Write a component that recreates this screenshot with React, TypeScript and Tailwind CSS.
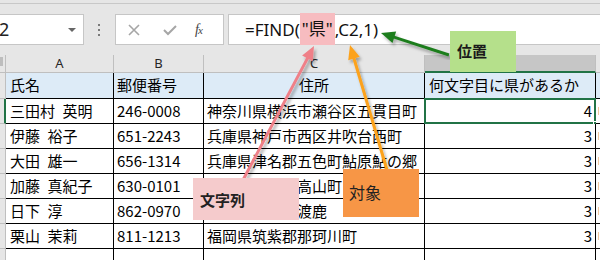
import React from "react";

type Row = { name: string; zip: string; addr: string; pos: string };

const rows: Row[] = [
  { name: "三田村\u2002英明", zip: "246-0008", addr: "神奈川県横浜市瀬谷区五貫目町", pos: "4" },
  { name: "伊藤\u2002裕子", zip: "651-2243", addr: "兵庫県神戸市西区井吹台西町", pos: "3" },
  { name: "大田\u2002雄一", zip: "656-1314", addr: "兵庫県津名郡五色町鮎原鮎の郷", pos: "3" },
  { name: "加藤\u2002真紀子", zip: "630-0101", addr: "奈良県生駒市高山町", pos: "3" },
  { name: "日下\u2002淳", zip: "862-0970", addr: "熊本県熊本市渡鹿", pos: "3" },
  { name: "栗山\u2002茉莉", zip: "811-1213", addr: "福岡県筑紫郡那珂川町", pos: "3" },
];

type Arrow = { x1: number; y1: number; x2: number; y2: number; color: string };

const arrows: Arrow[] = [
  { x1: 449, y1: 55, x2: 381, y2: 33, color: "#1f7d1f" },
  { x1: 243, y1: 180, x2: 314, y2: 46, color: "#ef8088" },
  { x1: 387, y1: 170, x2: 350, y2: 45, color: "#fca21c" },
];

function ArrowShape({ a }: { a: Arrow }) {
  const dx = a.x2 - a.x1;
  const dy = a.y2 - a.y1;
  const len = Math.hypot(dx, dy);
  const ux = dx / len;
  const uy = dy / len;
  const head = 14;
  const half = 6;
  const bx = a.x2 - ux * head;
  const by = a.y2 - uy * head;
  const pts = `${a.x2},${a.y2} ${bx - uy * half},${by + ux * half} ${bx + uy * half},${by - ux * half}`;
  return (
    <g filter="url(#shadow)">
      <line x1={a.x1} y1={a.y1} x2={bx + ux * 2} y2={by + uy * 2} stroke={a.color} strokeWidth={3} />
      <polygon points={pts} fill={a.color} />
    </g>
  );
}

function ColHead({ label, w, active }: { label: string; w: string; active?: boolean }) {
  return (
    <div
      className={`${w} shrink-0 flex items-center justify-center border-r border-[#bfbfbf] text-[13px] font-['Noto_Sans',sans-serif] ${
        active ? "bg-[#c6c6c6] border-b-2 border-b-[#217346] text-[#217346]" : "border-b border-b-[#bfbfbf] text-[#262626]"
      }`}
    >
      {label}
    </div>
  );
}

export default function App() {
  return (
    <div className="relative w-[600px] h-[260px] overflow-hidden bg-[#e6e6e6] font-['Noto_Sans_CJK_JP',sans-serif] text-black">
      {/* formula bar */}
      <div className="mt-[3px] h-[52px] border-t border-[#c8c8c8] flex items-start pt-[10px]">
        <div className="relative w-[84px] h-[31px] shrink-0 bg-white border border-l-0 border-[#c6c6c6] flex items-center">
          <span className="ml-[-1px] text-[18px] font-['Noto_Sans',sans-serif] text-[#222]">2</span>
          <span className="absolute right-[7px] top-[13px] w-0 h-0 border-l-[4px] border-r-[4px] border-t-[4px] border-l-transparent border-r-transparent border-t-[#666]" />
        </div>
        <div className="w-[31px] h-[31px] shrink-0 flex flex-col items-center justify-center gap-[3px] pr-[1px]">
          <span className="w-[2px] h-[2px] bg-[#7a7a7a]" />
          <span className="w-[2px] h-[2px] bg-[#7a7a7a]" />
          <span className="w-[2px] h-[2px] bg-[#7a7a7a]" />
        </div>
        <div className="w-[109px] h-[31px] shrink-0 bg-white border border-[#c6c6c6] flex items-center">
          <svg width="14" height="14" viewBox="0 0 14 14" className="ml-[11px]">
            <path d="M2 2 L12 12 M12 2 L2 12" stroke="#a6a6a6" strokeWidth="1.6" />
          </svg>
          <svg width="16" height="14" viewBox="0 0 16 14" className="ml-[21px]">
            <path d="M2 7 L6 11 L14 3" stroke="#a6a6a6" strokeWidth="2" fill="none" />
          </svg>
          <span className="ml-[17px] text-[14px] italic font-['Liberation_Serif',serif] text-[#444] tracking-[-1px]">
            f<span className="text-[11px]">x</span>
          </span>
        </div>
        <div className="ml-[4px] flex-1 h-[31px] bg-white border border-r-0 border-[#c6c6c6] flex items-stretch pl-[16px] text-[17px] font-['Noto_Sans','Noto_Sans_CJK_JP',sans-serif] text-[#111]">
          <span className="flex items-center">=FIND(</span>
          <span className="flex items-center bg-[#f7bcc0] px-[2px] -mt-[2px] -mb-[1px]">"県"</span>
          <span className="flex items-center">,C2,1)</span>
        </div>
      </div>

      {/* column headers */}
      <div className="flex h-[18px]">
        <div className="w-[6px] shrink-0 border-r border-b border-[#bfbfbf] relative">
          <span className="absolute left-0 top-[2px] w-[3px] h-[9px] bg-[#bdbdbd]" />
        </div>
        <ColHead label="A" w="w-[108px]" />
        <ColHead label="B" w="w-[90px]" />
        <ColHead label="C" w="w-[221px]" />
        <ColHead label="" w="w-[171px]" active />
        <div className="flex-1 border-b border-[#bfbfbf]" />
      </div>

      {/* header row */}
      <div className="flex h-[26px] text-[15px]">
        <div className="w-[6px] shrink-0 border-r border-b border-[#bfbfbf]" />
        <div className="w-[108px] shrink-0 bg-[#ddebf7] border-r border-b border-black flex items-center pl-[4px]">氏名</div>
        <div className="w-[90px] shrink-0 bg-[#ddebf7] border-r border-b border-black flex items-center pl-[3px]">郵便番号</div>
        <div className="w-[221px] shrink-0 bg-[#ddebf7] border-r border-b border-black flex items-center justify-center">住所</div>
        <div className="w-[171px] shrink-0 bg-[#ddebf7] border-r border-b border-black flex items-center pl-[4px]">何文字目に県があるか</div>
        <div className="flex-1 bg-[#ddebf7] border-b border-black" />
      </div>

      {/* data rows */}
      {rows.map((r, i) => (
        <div key={r.zip} className="flex h-[25px] text-[15px]">
          <div
            className={`w-[6px] shrink-0 border-b border-[#bfbfbf] ${
              i === 0 ? "border-r-2 border-r-[#217346]" : "border-r border-r-[#bfbfbf]"
            }`}
          />
          <div className="w-[108px] shrink-0 bg-white border-r border-b border-black flex items-center pl-[4px] whitespace-nowrap">
            {r.name}
          </div>
          <div className="w-[90px] shrink-0 bg-white border-r border-b border-black flex items-center pl-[3px]">{r.zip}</div>
          <div className="w-[221px] shrink-0 bg-white border-r border-b border-black flex items-center pl-[3px] whitespace-nowrap overflow-hidden">
            {r.addr}
          </div>
          <div className="relative w-[171px] shrink-0 bg-white border-r border-b border-black flex items-center justify-end pr-[3px]">
            {r.pos}
            {i === 0 && (
              <>
                <span className="absolute -top-[1px] -left-[1px] -right-[1px] -bottom-[1px] border-2 border-[#217346]" />
                <span className="absolute -right-[3px] -bottom-[3px] w-[5px] h-[5px] bg-[#217346] border border-white" />
              </>
            )}
          </div>
          <div className="flex-1 bg-white border-b border-black relative">
            <span className="absolute left-[2px] top-[8px] w-[1px] h-[8px] bg-[#f0c8a0]" />
          </div>
        </div>
      ))}

      {/* empty row */}
      <div className="flex h-[25px]">
        <div className="w-[6px] shrink-0 border-r border-[#bfbfbf]" />
        <div className="w-[108px] shrink-0 bg-white border-r border-black" />
        <div className="w-[90px] shrink-0 bg-white border-r border-black" />
        <div className="w-[221px] shrink-0 bg-white border-r border-black" />
        <div className="w-[171px] shrink-0 bg-white border-r border-black" />
        <div className="flex-1 bg-white" />
      </div>

      {/* arrows */}
      <svg className="absolute inset-0 pointer-events-none" width="600" height="260">
        <defs>
          <filter id="shadow" x="-20%" y="-20%" width="140%" height="140%">
            <feDropShadow dx="2" dy="3" stdDeviation="1.5" floodColor="#000" floodOpacity="0.3" />
          </filter>
        </defs>
        {arrows.map((a) => (
          <ArrowShape key={a.color} a={a} />
        ))}
      </svg>

      {/* callouts */}
      <div className="absolute left-[450px] top-[31px] w-[66px] h-[41px] bg-[#b5e08b] pl-[7px] pt-[9px] text-[15px] font-semibold text-[#1a1a1a]">
        位置
      </div>
      <div className="absolute left-[193px] top-[178px] w-[106px] h-[42px] bg-[#f5cbcc] pl-[7px] pt-[11px] text-[15px] font-semibold text-[#222]">
        文字列
      </div>
      <div className="absolute left-[343px] top-[169px] w-[76px] h-[48px] bg-[#f79646] pl-[6px] pt-[11px] text-[16px] text-[#222]">
        対象
      </div>
    </div>
  );
}
